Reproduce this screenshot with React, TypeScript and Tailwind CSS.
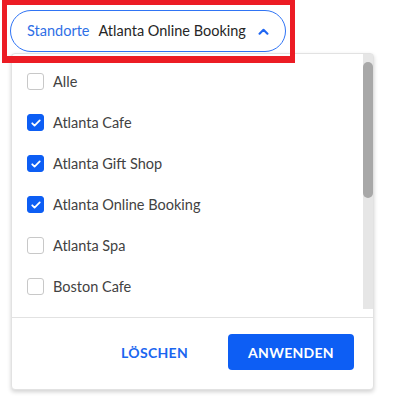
import React, { useState } from 'react';

const LOCATIONS = [
  'Alle',
  'Atlanta Cafe',
  'Atlanta Gift Shop',
  'Atlanta Online Booking',
  'Atlanta Spa',
  'Boston Cafe',
];

const CheckIcon: React.FC = () => (
  <svg viewBox="0 0 16 16" className="w-[12px] h-[12px]" fill="none">
    <path d="M3 8.4l3.1 3L13 4.6" stroke="#fff" strokeWidth="2.4" strokeLinecap="round" strokeLinejoin="round" />
  </svg>
);

export default function App() {
  const [checked, setChecked] = useState<string[]>(['Atlanta Cafe', 'Atlanta Gift Shop', 'Atlanta Online Booking']);

  const toggle = (name: string) => {
    setChecked(prev => (prev.includes(name) ? prev.filter(n => n !== name) : [...prev, name]));
  };

  return (
    <div className="relative w-[405px] h-[402px] bg-white font-['Lato','Noto_Sans',sans-serif] overflow-hidden">
      <div className="pt-[10px] pl-[10px]">
        {/* Trigger pill */}
        <button className="flex items-center w-[276px] h-[42px] rounded-full border border-[#2f74f5] pl-[16px] pr-[16px] bg-white">
          <span className="text-[14.5px] text-[#2f6fe6]">Standorte</span>
          <span className="ml-[9px] text-[14.5px] text-[#262626]">Atlanta Online Booking</span>
          <svg viewBox="0 0 12 8" className="ml-auto w-[11px] h-[7px]" fill="none">
            <path d="M1.5 6.5L6 2l4.5 4.5" stroke="#1f66f2" strokeWidth="2.4" strokeLinecap="round" strokeLinejoin="round" />
          </svg>
        </button>

        {/* Dropdown panel */}
        <div className="ml-[1px] mt-[1px] w-[363px] bg-white rounded-[4px] border border-[#e2e2e2] shadow-[0_2px_4px_rgba(0,0,0,0.18)]">
          <div className="flex h-[255px]">
            <ul className="flex-1 pt-[7px] overflow-hidden">
              {LOCATIONS.map(name => {
                const isChecked = checked.includes(name);
                return (
                  <li
                    key={name}
                    onClick={() => toggle(name)}
                    className="flex items-center h-[41px] pl-[15px] cursor-pointer"
                  >
                    <span
                      className={`flex items-center justify-center w-[17px] h-[17px] rounded-[3px] border ${
                        isChecked ? 'bg-[#0d5ef4] border-[#0d5ef4]' : 'bg-white border-[#c8c8c8]'
                      }`}
                    >
                      {isChecked && <CheckIcon />}
                    </span>
                    <span className="ml-[9px] text-[14.5px] text-[#424242]">{name}</span>
                  </li>
                );
              })}
            </ul>
            {/* Scrollbar */}
            <div className="relative w-[10px] bg-[#e6e6e6]">
              <div className="absolute left-0 right-0 top-[8px] h-[136px] rounded-full bg-[#a8a8a8]" />
            </div>
          </div>

          {/* Footer */}
          <div className="mt-[8px] border-t border-[#e2e2e2] flex justify-end items-center pt-[16px] pb-[19px] pr-[19px]">
            <button className="mr-[40px] text-[14px] font-bold text-[#1a66f0] tracking-[0.3px]">LÖSCHEN</button>
            <button className="w-[126px] h-[36px] rounded-[4px] bg-[#0d5ef4] text-white text-[14px] font-bold tracking-[0.3px]">
              ANWENDEN
            </button>
          </div>
        </div>
      </div>

      {/* Highlight annotation */}
      <div className="absolute left-[2px] top-0 w-[293px] h-[63px] border-[5px] border-b-[7px] border-[#ec1c24] pointer-events-none" />
    </div>
  );
}
